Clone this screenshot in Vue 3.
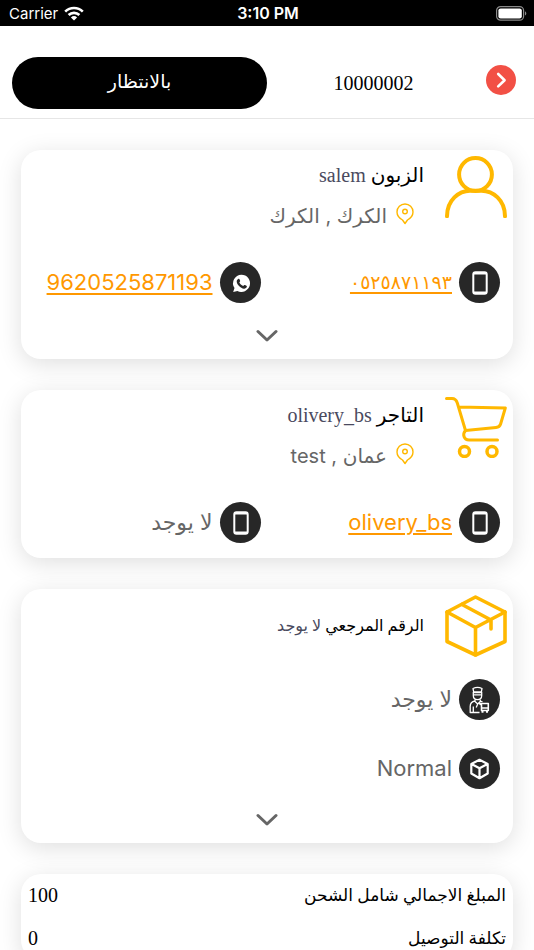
<template>
  <div class="screen">
    <div class="status-bar">
      <span class="carrier">
        Carrier
        <svg width="20" height="15" viewBox="0 0 20 15" fill="none" stroke="#fff" stroke-width="2.6">
          <path d="M1.2 5.6a12.6 12.6 0 0 1 17.6 0" />
          <path d="M4.6 9a7.8 7.8 0 0 1 10.8 0" />
          <path d="M10 14.6 6.9 11.4a4.5 4.5 0 0 1 6.2 0z" fill="#fff" stroke="none" />
        </svg>
      </span>
      <span class="clock">3:10 PM</span>
      <svg class="battery" width="31" height="15" viewBox="0 0 31 15">
        <rect x=".6" y=".6" width="27" height="13.6" rx="4" fill="none" stroke="#8a8a8a" stroke-width="1.2" />
        <rect x="2.4" y="2.4" width="23.4" height="10" rx="2.2" fill="#fff" />
        <path d="M29 5.2v4.4c1.8-.8 1.8-3.6 0-4.4z" fill="#8a8a8a" />
      </svg>
    </div>

    <header class="topbar">
      <button class="status-btn" dir="rtl">بالانتظار</button>
      <span class="order-no">10000002</span>
      <button class="back-btn" aria-label="رجوع">
        <svg width="30" height="30" viewBox="0 0 30 30" fill="none" stroke="#fff" stroke-width="2.6" stroke-linecap="round" stroke-linejoin="round">
          <path d="m12.2 9 6.4 6.2-6.4 6.2" />
        </svg>
      </button>
    </header>

    <main class="content" dir="rtl">
      <section v-for="card in cards" :key="card.title" class="card">
        <div class="card-head">
          <svg class="card-icon" viewBox="0 0 62 62" fill="none" stroke="#ffb800" stroke-linecap="round" stroke-linejoin="round">
            <g v-if="card.icon === 'user'" stroke-width="4">
              <circle cx="30.500" cy="18.500" r="16.400" />
              <path d="M2 60.300C2 44 14 34.800 25 34.800H36.500C48 34.800 60 44 60 60.300" />
            </g>
            <g v-else-if="card.icon === 'cart'" stroke-width="3">
              <path d="M1.500 2.500H7c3 0 4.500 2 5.300 4.500L20.500 34.500 51 31.500c2.500-.3 4-1.500 4.600-3.500L60.300 12 13.500 11" />
              <path d="M20.500 34.500c-3.500 4-1.500 9.500 3.500 9.500h28.500" />
              <circle cx="19.500" cy="55.500" r="5" stroke-width="3.500" />
              <circle cx="47" cy="55.500" r="5" stroke-width="3.500" />
            </g>
            <g v-else stroke-width="3.600">
              <path d="M30.500 2 60 17v29.500L30.500 60 2 46.500V17z" />
              <path d="M2 17l28.500 15.500L60 17M30.500 32.500V60M17 9.500l29 15.500v9" />
            </g>
          </svg>
          <div class="card-info" :class="{ single: !card.place }">
            <h2 class="card-title">{{ card.title }} <span>{{ card.name }}</span></h2>
            <p v-if="card.place" class="place">
              <svg width="18" height="22" viewBox="0 0 18 22" fill="none" stroke="#ffb800" stroke-width="1.400" stroke-linejoin="round">
                <path d="M9 20.500 6.500 17C3 15 1 12.500 1 9a8 8 0 0 1 16 0c0 3.500-2 6-5.500 8z" />
                <circle cx="9" cy="8.500" r="2.300" />
              </svg>
              {{ card.place }}
            </p>
          </div>
        </div>

        <div class="details" :class="{ stacked: card.stacked }">
          <div v-for="item in card.items" :key="item.icon + item.text" class="detail">
            <span class="badge">
              <svg v-if="item.icon === 'phone'" width="41" height="41" viewBox="0 0 41 41" fill="none" stroke="#fff">
                <rect x="14.300" y="10.300" width="13.400" height="21.400" rx="2.200" stroke-width="2" />
                <path d="M15 11.600h12M15 30.400h12" stroke-width="2" />
              </svg>
              <svg v-else-if="item.icon === 'whatsapp'" width="41" height="41" viewBox="0 0 41 41">
                <path d="M21.500 12.700a8.600 8.600 0 1 1-4.100 16.200l-4.200 1.100 1.300-3.900a8.600 8.600 0 0 1 7-13.400z" fill="#fff" />
                <path d="M18.200 16.900c.8-.5 1.300.1 1.900 1.800.2.600-.2 1-.8 1.600.8 1.700 2 2.900 3.900 3.700.9-1 1.200-1.300 1.700-1 1.900.9 2.100 1.100 2 1.600-.3 1.500-1.700 2.200-2.900 2.100-3.600-.5-7.100-4-7.300-7.200 0-1.100.6-2.100 1.500-2.600z" fill="#272727" />
              </svg>
              <svg v-else-if="item.icon === 'driver'" width="41" height="41" viewBox="0 0 41 41" fill="none" stroke="#fff" stroke-width="1.300" stroke-linejoin="round">
                <path d="M14 9.500c2.500-1.200 6.500-1.200 9 0l-.7 3.500h-7.600zM14 13.500h9.200M14.300 15.800h8.400M14.300 13v3.500c0 5.500 8.400 5.500 8.400 0V13" />
                <path d="M16 20.500v2l2.700 2.500 2.600-2.500v-2M16 22c-3.200.6-4.800 2.400-4.800 5.500v6h9.300M14.300 27.500v6M21.300 22l2.200.8M18.700 25l-1.500 3.500" />
                <path d="M20.500 24.500h8.800v7h-6.800v-5.500zM22.500 29h6.800" stroke-width="1.600" />
                <path d="M23.500 31.500v2.300M28 31.500v2.300" stroke-width="2" />
              </svg>
              <svg v-else width="41" height="41" viewBox="0 0 41 41" fill="none" stroke="#fff" stroke-width="2.200" stroke-linejoin="round">
                <path d="M20.500 11.800 28.700 16v9.500l-8.200 4.700-8.200-4.700V16zM12.500 16l8 4.300 8-4.300M20.500 20.300v9.900" />
              </svg>
            </span>
            <a v-if="item.href" :href="item.href" :class="{ 'eastern-digits': item.eastern }">{{ item.text }}</a>
            <span v-else>{{ item.text }}</span>
          </div>
        </div>

        <button v-if="card.expandable" class="toggle" aria-label="المزيد" @click="card.open = !card.open">
          <svg width="22" height="14" viewBox="0 0 22 14" fill="none" stroke="#666" stroke-width="3" stroke-linecap="round" stroke-linejoin="round">
            <path d="m2 2.500 9 8.500 9-8.500" />
          </svg>
        </button>
      </section>

      <section class="card">
        <dl class="totals">
          <div v-for="row in totals" :key="row.label" class="total">
            <dt>{{ row.label }}</dt>
            <dd>{{ row.value }}</dd>
          </div>
        </dl>
      </section>
    </main>
  </div>
</template>

<script setup>
import { ref } from 'vue'

const cards = ref([
  {
    icon: 'user',
    title: 'الزبون',
    name: 'salem',
    place: 'الكرك , الكرك',
    expandable: true,
    open: false,
    items: [
      { icon: 'phone', text: '٠٥٢٥٨٧١١٩٣', href: 'tel:0525871193', eastern: true },
      { icon: 'whatsapp', text: '9620525871193', href: 'https://wa.me/9620525871193' },
    ],
  },
  {
    icon: 'cart',
    title: 'التاجر',
    name: 'olivery_bs',
    place: 'عمان , test',
    items: [
      { icon: 'phone', text: 'olivery_bs', href: 'tel:olivery_bs' },
      { icon: 'phone', text: 'لا يوجد' },
    ],
  },
  {
    icon: 'box',
    title: 'الرقم المرجعي',
    name: 'لا يوجد',
    stacked: true,
    expandable: true,
    open: false,
    items: [
      { icon: 'driver', text: 'لا يوجد' },
      { icon: 'cube', text: 'Normal' },
    ],
  },
])

const totals = [
  { label: 'المبلغ الاجمالي شامل الشحن', value: 100 },
  { label: 'تكلفة التوصيل', value: 0 },
]
</script>

<style>
body {
  margin: 0;
  background: #fff;
}
</style>

<style scoped>
.screen {
  display: flex;
  flex-direction: column;
  height: 100vh;
  overflow: hidden;
  background: #fff;
  color: #000;
  font-family: Inter, "DejaVu Sans", sans-serif;
}

button {
  padding: 0;
  border: 0;
  cursor: pointer;
}

svg {
  display: block;
  flex: none;
}

.status-bar {
  display: grid;
  grid-template-columns: 1fr auto 1fr;
  align-items: center;
  flex: none;
  height: 26px;
  padding: 0 7px 0 9px;
  background: #000;
  color: #fff;
  font-size: 15px;
}
.carrier {
  display: flex;
  align-items: center;
  gap: 6px;
}
.clock {
  font-size: 16px;
  font-weight: 600;
}
.battery {
  justify-self: end;
}

.topbar {
  display: flex;
  align-items: center;
  flex: none;
  padding: 31px 18px 9px 12px;
  border-bottom: 1px solid #e6e6e6;
}
.status-btn {
  flex: 0 0 50.6%;
  height: 52px;
  padding-bottom: 4px;
  border-radius: 26px;
  background: #000;
  color: #fff;
  font-family: "Liberation Serif", "DejaVu Sans", serif;
  font-size: 19px;
}
.order-no {
  flex: 1;
  padding-right: 6px;
  text-align: center;
  font-family: "Liberation Serif", serif;
  font-size: 20px;
}
.back-btn {
  width: 30px;
  height: 30px;
  margin-bottom: 7px;
  border-radius: 50%;
  background: #f25045;
}

.content {
  display: flex;
  flex-direction: column;
  gap: 31px;
  flex: 1;
  overflow-y: auto;
  scrollbar-width: none;
  padding: 31px 21px;
}

.card {
  flex: none;
  border-radius: 20px;
  background: #fff;
  box-shadow: 0 5px 24px rgba(0, 0, 0, 0.13);
}

.card-head {
  display: flex;
  gap: 21px;
  padding: 6px 6px 0;
}
.card-icon {
  width: 62px;
  height: 62px;
}
.card-info {
  flex: 1;
}
.card-info.single {
  padding-top: 12px;
}
.card-title {
  margin: 0;
  font-family: "Liberation Serif", "DejaVu Sans", serif;
  font-size: 20px;
  font-weight: 400;
  line-height: 38px;
}
.single .card-title {
  font-size: 16px;
}
.card-title span {
  color: #4a4a5e;
}
.place {
  display: flex;
  gap: 9px;
  margin: 0;
  padding: 0 10px;
  color: #666;
  font-size: 20px;
  line-height: 44px;
}
.place svg {
  margin-top: 9px;
}

.details {
  display: grid;
  grid-template-columns: 1fr 1fr;
  padding: 24px 13px 15px 0;
}
.details.stacked {
  grid-template-columns: 1fr;
  gap: 28px;
  padding: 22px 13px 13px 0;
}
.detail {
  display: flex;
  align-items: center;
  gap: 7px;
  color: #666;
  font-size: 22px;
  line-height: 41px;
}
.detail a {
  color: #ff9800;
  text-decoration-thickness: 2px;
  text-underline-offset: 3px;
}
.detail .eastern-digits {
  font-size: 19px;
}
.badge {
  flex: none;
  width: 41px;
  height: 41px;
  border-radius: 50%;
  background: #272727;
}

.toggle {
  display: flex;
  justify-content: center;
  width: 100%;
  padding: 11px 0 16px;
  background: none;
}

.totals {
  margin: 0;
  padding: 0 7px;
}
.total {
  display: flex;
  justify-content: space-between;
  font-family: "Liberation Serif", "DejaVu Sans", serif;
  line-height: 43px;
}
.total dt {
  font-size: 17px;
}
.total dd {
  margin: 0;
  font-size: 20px;
}
</style>
